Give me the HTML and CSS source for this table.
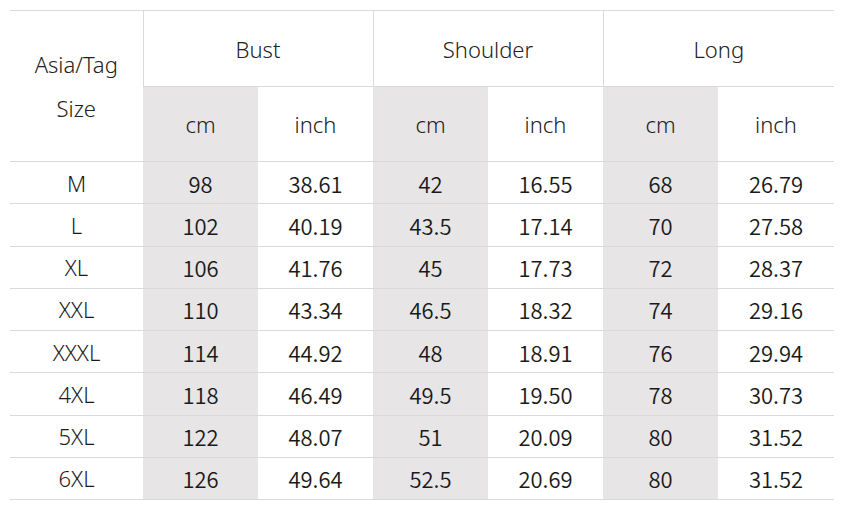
FILE: index.html
```html
<!DOCTYPE html>
<html>
<head>
<meta charset="utf-8">
<link rel="stylesheet" href="styles.css">
</head>
<body>
<table class="size-table">
  <colgroup>
    <col class="c-size">
    <col class="c-val"><col class="c-val"><col class="c-val">
    <col class="c-val"><col class="c-val"><col class="c-last">
  </colgroup>
  <thead>
    <tr class="h1">
      <th rowspan="2" class="size-head">Asia/Tag<br>Size</th>
      <th colspan="2" class="group">Bust</th>
      <th colspan="2" class="group">Shoulder</th>
      <th colspan="2" class="group">Long</th>
    </tr>
    <tr class="h2">
      <th class="cm">cm</th><th>inch</th>
      <th class="cm">cm</th><th>inch</th>
      <th class="cm">cm</th><th>inch</th>
    </tr>
  </thead>
  <tbody>
    <tr><td>M</td><td class="cm">98</td><td>38.61</td><td class="cm">42</td><td>16.55</td><td class="cm">68</td><td>26.79</td></tr>
    <tr><td>L</td><td class="cm">102</td><td>40.19</td><td class="cm">43.5</td><td>17.14</td><td class="cm">70</td><td>27.58</td></tr>
    <tr><td>XL</td><td class="cm">106</td><td>41.76</td><td class="cm">45</td><td>17.73</td><td class="cm">72</td><td>28.37</td></tr>
    <tr><td>XXL</td><td class="cm">110</td><td>43.34</td><td class="cm">46.5</td><td>18.32</td><td class="cm">74</td><td>29.16</td></tr>
    <tr><td>XXXL</td><td class="cm">114</td><td>44.92</td><td class="cm">48</td><td>18.91</td><td class="cm">76</td><td>29.94</td></tr>
    <tr><td>4XL</td><td class="cm">118</td><td>46.49</td><td class="cm">49.5</td><td>19.50</td><td class="cm">78</td><td>30.73</td></tr>
    <tr><td>5XL</td><td class="cm">122</td><td>48.07</td><td class="cm">51</td><td>20.09</td><td class="cm">80</td><td>31.52</td></tr>
    <tr><td>6XL</td><td class="cm">126</td><td>49.64</td><td class="cm">52.5</td><td>20.69</td><td class="cm">80</td><td>31.52</td></tr>
  </tbody>
</table>
</body>
</html>
```
FILE: styles.css
```css
html, body {
  margin: 0;
  padding: 0;
  background: #ffffff;
}

body {
  padding: 10px 0 0 10px;
}

.size-table {
  border-collapse: collapse;
  table-layout: fixed;
  width: 824px;
  color: #1e1e1e;
  font-family: "Noto Sans CJK SC", "Noto Sans", sans-serif;
  font-size: 22px;
}

.c-size { width: 133px; }
.c-val { width: 115px; }
.c-last { width: 116px; }

.size-table th,
.size-table td {
  padding: 0;
  text-align: center;
  vertical-align: middle;
  border-bottom: 1px solid #dadada;
}

.size-table th {
  font-family: "Noto Sans", sans-serif;
  font-weight: 300;
  color: #222;
}

.h1 th { border-top: 1px solid #dadada; height: 75px; }
.h2 th { height: 74px; }

.size-head { line-height: 44px; }

.group { border-left: 1px solid #dadada; }

.size-table td {
  height: 41.25px;
  font-weight: 350;
  color: #1a1a1a;
}

.size-table tbody td:first-child {
  font-family: "Noto Sans", sans-serif;
  font-weight: 300;
}

.cm { background: #e7e5e6; }
```
